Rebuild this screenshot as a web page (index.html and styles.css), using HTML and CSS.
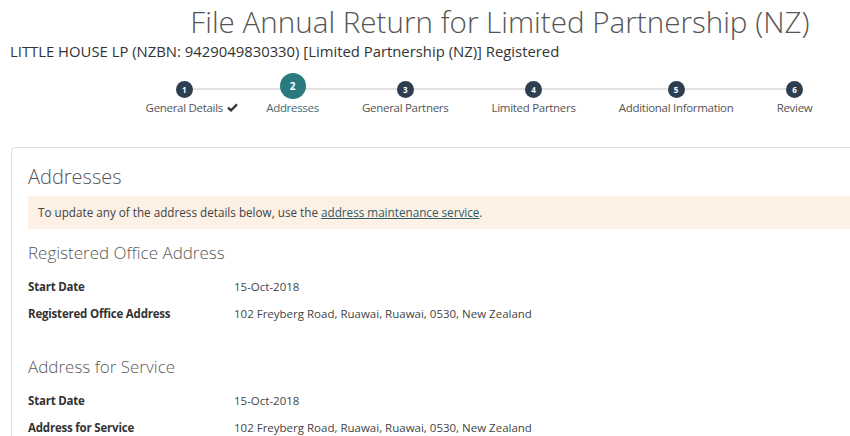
FILE: index.html
```html
<!DOCTYPE html>
<html lang="en">
<head>
<meta charset="utf-8">
<title>File Annual Return for Limited Partnership (NZ)</title>
<link rel="stylesheet" href="styles.css">
</head>
<body>
<div class="page">
  <header class="head">
    <h1 class="title">File Annual Return for Limited Partnership (NZ)</h1>
    <p class="entity">LITTLE HOUSE LP (NZBN: 9429049830330) [Limited Partnership (NZ)] Registered</p>
  </header>

  <ol class="stepper">
    <li class="step done">
      <span class="dot">1</span>
      <span class="label">General Details<span class="check"><svg width="11" height="9" viewBox="0 0 11 9"><path d="M1 4.6 L4 7.4 L10 1.4" fill="none" stroke="#333" stroke-width="2.2"/></svg></span></span>
    </li>
    <li class="step active">
      <span class="dot">2</span>
      <span class="label">Addresses</span>
    </li>
    <li class="step">
      <span class="dot">3</span>
      <span class="label">General Partners</span>
    </li>
    <li class="step">
      <span class="dot">4</span>
      <span class="label">Limited Partners</span>
    </li>
    <li class="step">
      <span class="dot">5</span>
      <span class="label">Additional Information</span>
    </li>
    <li class="step">
      <span class="dot">6</span>
      <span class="label">Review</span>
    </li>
  </ol>

  <section class="card">
    <h2 class="card-title">Addresses</h2>
    <div class="notice">To update any of the address details below, use the <a href="#" class="link">address maintenance service</a>.</div>

    <h3 class="section-title">Registered Office Address</h3>
    <dl class="details">
      <div class="row"><dt>Start Date</dt><dd>15-Oct-2018</dd></div>
      <div class="row"><dt>Registered Office Address</dt><dd>102 Freyberg Road, Ruawai, Ruawai, 0530, New Zealand</dd></div>
    </dl>

    <h3 class="section-title second">Address for Service</h3>
    <dl class="details">
      <div class="row"><dt>Start Date</dt><dd>15-Oct-2018</dd></div>
      <div class="row"><dt>Address for Service</dt><dd>102 Freyberg Road, Ruawai, Ruawai, 0530, New Zealand</dd></div>
    </dl>
  </section>
</div>
</body>
</html>
```

FILE: styles.css
```css
html, body {
  margin: 0;
  padding: 0;
  background: #fff;
  overflow: hidden;
}

body {
  font-family: "Open Sans", "DejaVu Sans", sans-serif;
  color: #444;
}

.page {
  width: 980px;
  padding-left: 10px;
}

.head {
  padding-top: 4px;
}

.title {
  margin: 0;
  font-size: 29.6px;
  line-height: 36px;
  font-weight: 300;
  color: #555;
  text-align: center;
}

.entity {
  margin: 1px 0 0;
  font-size: 14.85px;
  line-height: 20px;
  color: #333;
}

.stepper {
  position: relative;
  list-style: none;
  display: flex;
  margin: 10px 0 0 114px;
  padding: 0;
}

.stepper::before {
  content: "";
  position: absolute;
  left: 59px;
  width: 612px;
  top: 17px;
  height: 2px;
  background: #e2e2e2;
}

.step {
  position: relative;
  display: flex;
  flex-direction: column;
  align-items: center;
  padding: 0 21.6px;
}

.dot {
  display: flex;
  align-items: center;
  justify-content: center;
  width: 17px;
  height: 17px;
  margin-top: 10px;
  border-radius: 50%;
  background: #2e3e51;
  color: #fff;
  font-size: 8px;
  font-weight: 700;
  z-index: 1;
}

.step.active .dot {
  width: 26px;
  height: 26px;
  margin-top: 2px;
  background: #2b7a80;
  font-size: 10px;
}

.label {
  margin-top: 1px;
  font-size: 11.5px;
  letter-spacing: -0.3px;
  line-height: 18px;
  color: #555;
  white-space: nowrap;
}

.step.active .label {
  margin-top: 0;
  color: #466a72;
}

.check {
  display: inline-block;
  width: 0;
  overflow: visible;
  white-space: nowrap;
}

.check svg {
  margin-left: 4px;
  vertical-align: 0;
}

.card {
  margin-top: 30px;
  margin-left: 1px;
  border: 1px solid #e0e0e0;
  border-right: none;
  border-radius: 4px 0 0 4px;
  padding: 15px 0 20px 16px;
}

.card-title {
  margin: 0;
  font-size: 20px;
  line-height: 28px;
  font-weight: 300;
  color: #555;
}

.notice {
  margin-top: 5px;
  padding: 8px 10px;
  background: #fdf0e5;
  font-size: 11.7px;
  line-height: 17px;
  color: #444;
}

.link {
  color: #2e5c66;
  text-decoration: underline;
}

.section-title {
  margin: 12px 0 0;
  font-size: 17px;
  line-height: 24px;
  font-weight: 300;
  color: #5a5a5a;
}

.section-title.second {
  margin-top: 32px;
}

.details {
  margin: 13px 0 0;
}

.row {
  display: flex;
  margin-bottom: 9px;
  font-size: 11.5px;
  line-height: 18px;
}

.row dt {
  width: 206px;
  font-weight: 700;
  letter-spacing: -0.2px;
  color: #333;
}

.row dd {
  margin: 0;
  color: #444;
}
```
